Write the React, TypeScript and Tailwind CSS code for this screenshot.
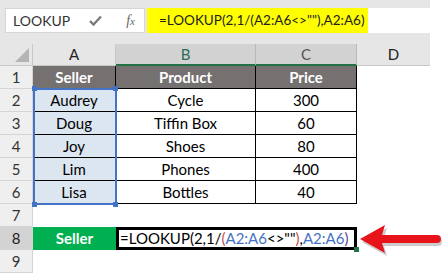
import React from 'react';

const font = { fontFamily: 'Lato, "Open Sans", sans-serif' };

const rows = [
  { n: 2, seller: 'Audrey', product: 'Cycle', price: '300' },
  { n: 3, seller: 'Doug', product: 'Tiffin Box', price: '60' },
  { n: 4, seller: 'Joy', product: 'Shoes', price: '80' },
  { n: 5, seller: 'Lim', product: 'Phones', price: '400' },
  { n: 6, seller: 'Lisa', product: 'Bottles', price: '40' },
];

const RowHead: React.FC<{ n: number; active?: boolean }> = ({ n, active }) => (
  <div
    className={
      'flex items-center justify-center border-b border-r border-[#d4d4d4] text-[15px] ' +
      (active ? 'bg-[#d3d3d3] text-[#222]' : 'bg-[#efefef] text-[#333]')
    }
  >
    {n}
  </div>
);

export default function App() {
  return (
    <div className="relative w-[444px] h-[273px] overflow-hidden bg-white text-black" style={font}>
      {/* formula bar */}
      <div className="w-[430px] h-[44px] bg-[#e6e6e6] flex items-start pt-[8px] pl-[5px] gap-[2px]">
        <div className="w-[140px] h-[25px] bg-white border border-[#d6d6d6] flex items-center pl-[7px] text-[14px] text-[#333]">
          <span>LOOKUP</span>
          <svg className="ml-[19px]" width="13" height="11" viewBox="0 0 13 11">
            <path d="M1 6 L4.5 9.5 L12 1.5" stroke="#7a7a7a" strokeWidth="2.4" fill="none" />
          </svg>
          <span className="ml-[24px] italic text-[#666] text-[14px]" style={{ fontFamily: '"Liberation Serif", serif' }}>
            f<span className="text-[11px]">x</span>
          </span>
        </div>
        <div className="flex-1 h-[25px] bg-white flex">
          <div className="w-[221px] h-full bg-[#ffff00] flex items-center pl-[12px] text-[13.5px] text-[#222] whitespace-nowrap">
            =LOOKUP(2,1/(A2:A6&lt;&gt;""),A2:A6)
          </div>
        </div>
      </div>

      {/* sheet grid */}
      <div className="grid w-[430px] grid-cols-[33px_83px_140px_101px_73px] grid-rows-[22px_repeat(9,23px)]">
        {/* column headers */}
        <div className="bg-[#e6e6e6] border-r border-b border-[#c8c8c8] relative">
          <svg className="absolute right-[3px] bottom-[3px]" width="14" height="14" viewBox="0 0 14 14">
            <path d="M14 0 L14 14 L0 14 Z" fill="#b4b4b4" />
          </svg>
        </div>
        <div className="bg-[#e6e6e6] border-r border-b border-[#c8c8c8] flex items-center justify-center text-[15px] text-[#222]">A</div>
        <div className="bg-[#d2d2d2] border-r border-[#b8b8b8] border-b-2 border-b-[#217346] flex items-center justify-center text-[15px] text-[#2c6a58]">B</div>
        <div className="bg-[#d2d2d2] border-r border-[#b8b8b8] border-b-2 border-b-[#217346] flex items-center justify-center text-[15px] text-[#555]">C</div>
        <div className="bg-[#e6e6e6] border-b border-[#c8c8c8] flex items-center justify-center text-[15px] text-[#222]">D</div>

        {/* row 1 */}
        <RowHead n={1} />
        <div className="bg-[#767171] border-b border-r border-black flex items-center justify-center text-white font-bold text-[15px]">Seller</div>
        <div className="bg-[#767171] border-b border-r border-black flex items-center justify-center text-white font-bold text-[15px]">Product</div>
        <div className="bg-[#767171] border-b border-r border-black flex items-center justify-center text-white font-bold text-[15px]">Price</div>
        <div />

        {rows.map((r) => (
          <React.Fragment key={r.n}>
            <RowHead n={r.n} />
            <div className="bg-[#dce6f1] border-b border-r border-black flex items-center justify-center text-[15px]">{r.seller}</div>
            <div className="border-b border-r border-black flex items-center justify-center text-[15px]">{r.product}</div>
            <div className="border-b border-r border-black flex items-center justify-center text-[15px]">{r.price}</div>
            <div />
          </React.Fragment>
        ))}

        <RowHead n={7} />
        <div className="col-span-4" />

        <RowHead n={8} active />
        <div className="bg-[#00b050] flex items-center justify-center text-white font-bold text-[15px]">Seller</div>
        <div className="col-span-2 relative border-[3px] border-black flex items-center pl-[1px] text-[15px] whitespace-nowrap">
          <span>=LOOKUP(2,1/</span>
          <span className="text-[#c0504d]">(</span>
          <span className="text-[#4472c4]">A2:A6</span>
          <span>&lt;&gt;""</span>
          <span className="text-[#c0504d]">)</span>
          <span>,</span>
          <span className="text-[#4472c4]">A2:A6</span>
          <span className="text-[#5b3f8f]">)</span>
          <div className="absolute right-[-5px] bottom-[-5px] w-[5px] h-[5px] bg-[#217346]" />
        </div>
        <div />

        <RowHead n={9} />
        <div className="col-span-4" />
      </div>

      {/* selection A2:A6 */}
      <div className="absolute left-[33px] top-[88px] w-[84px] h-[117px] border-2 border-[#4472c4] pointer-events-none" />
      <div className="absolute left-[32px] top-[86px] w-[5px] h-[5px] bg-[#4472c4]" />
      <div className="absolute left-[113px] top-[86px] w-[5px] h-[5px] bg-[#4472c4]" />
      <div className="absolute left-[32px] top-[202px] w-[5px] h-[5px] bg-[#4472c4]" />
      <div className="absolute left-[113px] top-[202px] w-[5px] h-[5px] bg-[#4472c4]" />

      {/* red arrow */}
      <svg className="absolute left-[358px] top-[223px]" width="86" height="34" viewBox="0 0 86 34">
        <path d="M4 19 L29 5 L26 15 L80 15 A4 4 0 0 1 80 23 L26 23 L29 33 Z" fill="#9a9a9a" opacity="0.5" />
        <path d="M2 16 L27 2 L24 12 L79 12 A4 4 0 0 1 79 20 L24 20 L27 30 Z" fill="#e8141c" />
      </svg>
    </div>
  );
}
